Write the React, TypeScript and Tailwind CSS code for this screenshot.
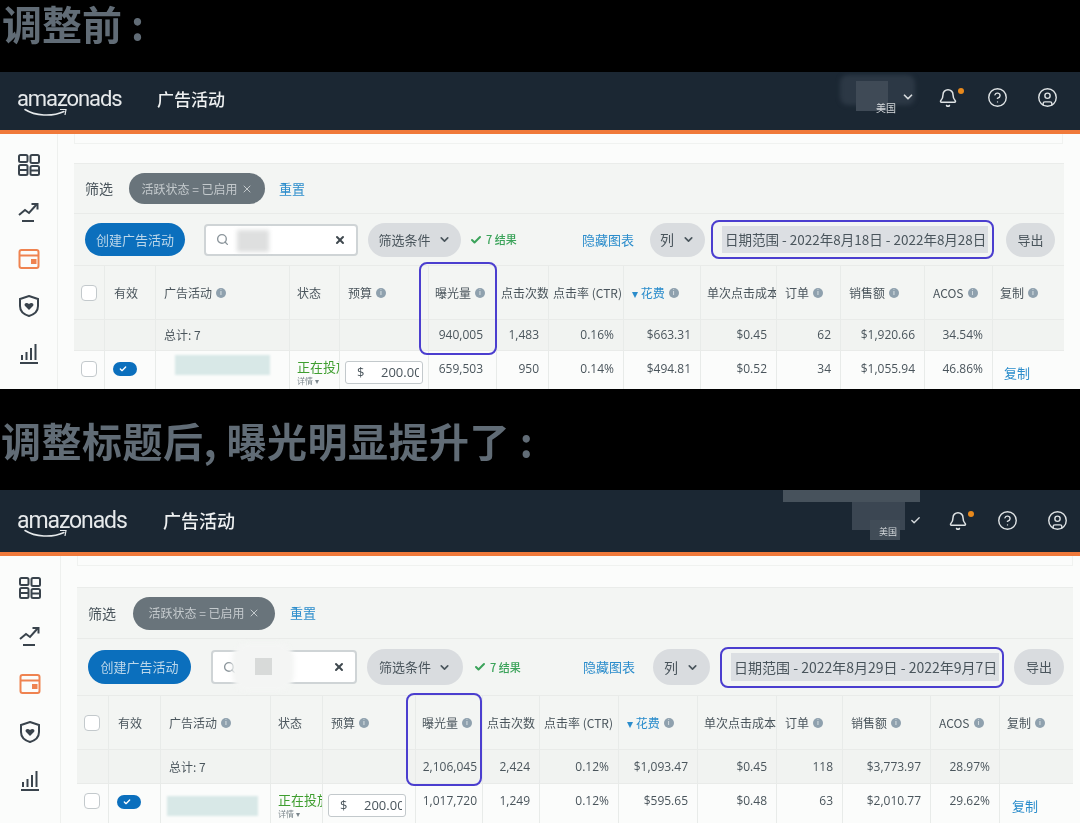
import { Bell, Check, ChevronDown, CircleHelp, CircleUser, Search, X } from 'lucide-react'

const cjk = "font-['Noto_Sans_CJK_SC','Noto_Sans',sans-serif]"

type Shot = {
  frame: string
  header: string
  logo: string
  title: string
  rail: string
  railGap: string
  card: string
  panel: string
  filterRow: string
  chip: string
  toolbar: string
  createBtn: string
  searchBox: string
  filterBtn: string
  resultMl: string
  hideMl: string
  colBtn: string
  dateBox: string
  dateInner: string
  exportBtn: string
  cols: string
  headRow: string
  totalRow: string
  dataRow: string
  firstNum: string
  numTop: string
  namePatch: string
  copyLink: string
  icons: string
  totals: string[]
  row: string[]
  dates: string
  box: string
}

const heads: [string, string][] = [
  ['曝光量', 'pl-[6px]'],
  ['点击次数', 'pl-[4px]'],
  ['点击率 (CTR)', 'pl-[4px]'],
  ['▾ 花费', 'pl-[8px]'],
  ['单次点击成本', 'pl-[6px]'],
  ['订单', 'pl-[8px]'],
  ['销售额', 'pl-[8px]'],
  ['ACOS', 'pl-[8px]'],
  ['复制', 'pl-[7px]'],
]

const before: Shot = {
  frame: 'h-[317px]',
  header: 'h-[58px] pb-[4px]',
  logo: 'text-[22px] w-[140px]',
  title: 'text-[17px]',
  rail: 'w-[58px]',
  railGap: 'pt-[20px] gap-[25px]',
  card: 'h-[10px] ml-[16px] w-[989px]',
  panel: 'ml-[16px] mt-[19px] w-[990px]',
  filterRow: 'h-[50px] pl-[11px]',
  chip: 'w-[136px] h-[31px] ml-[16px] mr-[14px]',
  toolbar: 'h-[51px] pl-[11px]',
  createBtn: 'w-[100px] h-[33px]',
  searchBox: 'w-[154px] h-[32px] ml-[19px]',
  filterBtn: 'w-[93px] h-[34px] ml-[10px]',
  resultMl: 'ml-[9px] w-[53px]',
  hideMl: 'ml-[59px] w-[52px]',
  colBtn: 'w-[55px] h-[34px] ml-[16px]',
  dateBox: 'w-[283px] h-[39px] ml-[6px] pl-[9px] pr-[4px] text-[13.5px]',
  dateInner: 'h-[27px]',
  exportBtn: 'w-[49px] h-[34px] ml-[12px]',
  cols: 'grid-cols-[31px_51px_134px_50px_89px_68px_52px_75px_77px_76px_64px_84px_68px_71px]',
  headRow: 'h-[54px]',
  totalRow: 'h-[31px]',
  dataRow: 'h-[42px]',
  firstNum: 'pr-[13px]',
  numTop: 'pt-[10px]',
  namePatch: 'ml-[19px] mt-[4px] w-[95px] h-[20px]',
  copyLink: 'pl-[11px]',
  icons: 'top-[15px] right-[22px] gap-[29px]',
  totals: ['940,005', '1,483', '0.16%', '$663.31', '$0.45', '62', '$1,920.66', '34.54%', ''],
  row: ['659,503', '950', '0.14%', '$494.81', '$0.52', '34', '$1,055.94', '46.86%'],
  dates: '日期范围 - 2022年8月18日 - 2022年8月28日',
  box: 'left-[419px] top-[190px] w-[78px] h-[93px]',
}

const after: Shot = {
  frame: 'h-[333px]',
  header: 'h-[62px] pb-[2px]',
  logo: 'text-[23px] w-[146px]',
  title: 'text-[18px]',
  rail: 'w-[61px]',
  railGap: 'pt-[21px] gap-[26px]',
  card: 'h-[10px] ml-[16px] w-[996px]',
  panel: 'ml-[16px] mt-[21px] w-[996px]',
  filterRow: 'h-[51px] pl-[11px]',
  chip: 'w-[142px] h-[33px] ml-[17px] mr-[15px]',
  toolbar: 'h-[56px] pl-[11px]',
  createBtn: 'w-[103px] h-[34px]',
  searchBox: 'w-[146px] h-[34px] ml-[20px]',
  filterBtn: 'w-[96px] h-[36px] ml-[10px]',
  resultMl: 'ml-[11px] w-[53px]',
  hideMl: 'ml-[56px] w-[52px]',
  colBtn: 'w-[57px] h-[36px] ml-[18px]',
  dateBox: 'w-[284px] h-[41px] ml-[10px] pl-[9px] pr-[3px] text-[14px]',
  dateInner: 'h-[28px]',
  exportBtn: 'w-[50px] h-[36px] ml-[10px]',
  cols: 'grid-cols-[32px_52px_110px_52px_93px_67px_57px_79px_79px_79px_66px_88px_69px_73px]',
  headRow: 'h-[54px]',
  totalRow: 'h-[34px]',
  dataRow: 'h-[40px]',
  firstNum: 'pr-[5px]',
  numTop: 'pt-[9px]',
  namePatch: 'ml-[6px] mt-[12px] w-[91px] h-[20px]',
  copyLink: 'pl-[12px]',
  icons: 'top-[20px] right-[12px] gap-[29px]',
  totals: ['2,106,045', '2,424', '0.12%', '$1,093.47', '$0.45', '118', '$3,773.97', '28.97%', ''],
  row: ['1,017,720', '1,249', '0.12%', '$595.65', '$0.48', '63', '$2,010.77', '29.62%'],
  dates: '日期范围 - 2022年8月29日 - 2022年9月7日',
  box: 'left-[406px] top-[203px] w-[76px] h-[93px]',
}

function Info() {
  return (
    <span className="inline-flex w-[10px] h-[10px] shrink-0 ml-[4px] rounded-full bg-[#8fa1ae] items-center justify-center text-[7px] leading-none text-[#eef2f3]">
      i
    </span>
  )
}

function Amazon({ cls }: { cls: string }) {
  return (
    <div className={`relative shrink-0 font-['Roboto',sans-serif] tracking-[-1.1px] leading-none text-[#e6e9eb] ${cls}`}>
      amazonads
      <svg className="absolute left-[7px] top-[20px]" width="46" height="10" viewBox="0 0 46 10" fill="none">
        <path d="M1 1.5C11 8 28 9 40 3.5" stroke="#e6e9eb" strokeWidth="1.5" strokeLinecap="round" />
        <path d="M36 1.5L42 1.5L41 7" stroke="#e6e9eb" strokeWidth="1.2" />
      </svg>
    </div>
  )
}

function RailIcons({ cls }: { cls: string }) {
  return (
    <div className={`flex flex-col items-center ${cls}`}>
      <svg width="22" height="22" viewBox="0 0 22 22" fill="none" stroke="#39434c" strokeWidth="2">
        <rect x="1" y="1" width="8.5" height="7" rx="1.5" />
        <rect x="12.5" y="1" width="8.5" height="8" rx="1.5" />
        <rect x="1" y="11" width="8.5" height="10" rx="1.5" />
        <rect x="12.5" y="12" width="8.5" height="9" rx="1.5" />
        <path d="M1 16H9.5M12.5 16.5H21" />
      </svg>
      <svg width="22" height="22" viewBox="0 0 22 22" fill="none" stroke="#39434c" strokeWidth="2">
        <path d="M1 14L7 9L11 12L19 3" />
        <path d="M13.5 3H19.5V8.5" />
        <path d="M4 20H16" />
      </svg>
      <svg width="22" height="22" viewBox="0 0 22 22" fill="none" stroke="#ef8350" strokeWidth="2">
        <rect x="1.5" y="2" width="19" height="18" rx="2" />
        <path d="M1.5 7.5H20.5" />
        <rect x="14" y="12" width="3.5" height="3" fill="#ef8350" />
      </svg>
      <svg width="22" height="22" viewBox="0 0 22 22" fill="none" stroke="#39434c" strokeWidth="2">
        <path d="M11 1L20 4V11C20 16 16 19.5 11 21C6 19.5 2 16 2 11V4L11 1Z" />
        <path d="M11 15L6.8 10.8C5.6 8.6 8.6 6.8 11 9C13.4 6.8 16.4 8.6 15.2 10.8L11 15Z" fill="#39434c" stroke="none" />
      </svg>
      <svg width="22" height="22" viewBox="0 0 22 22" fill="none" stroke="#39434c" strokeWidth="2">
        <path d="M4 18V13M8.5 18V10M13 18V6M17.5 18V2" />
        <path d="M2 21H20" />
      </svg>
    </div>
  )
}

function Account({ later }: { later: boolean }) {
  if (later) {
    return (
      <>
        <div className="absolute left-[783px] top-0 w-[137px] h-[12px] bg-[#47525c]" />
        <div className="absolute left-[852px] top-[12px] w-[53px] h-[28px] bg-[#3b4652]" />
        <div className="absolute left-[870px] top-[30px] w-[30px] h-[20px] bg-[#414c57]" />
        <span className={`absolute left-[879px] top-[36px] text-[9px] leading-[12px] text-[#d5d9dc] ${cjk}`}>美国</span>
        <Check className="absolute left-[910px] top-[25px] text-[#d5d9dc]" size={11} strokeWidth={3} />
      </>
    )
  }
  return (
    <>
      <div className="absolute left-[840px] top-[3px] w-[75px] h-[30px] rounded-lg bg-[#2c3845] blur-[2px]" />
      <div className="absolute left-[856px] top-[9px] w-[32px] h-[30px] bg-[#3f4a56]" />
      <span className={`absolute left-[876px] top-[29px] text-[10px] leading-[14px] text-[#d5d9dc] ${cjk}`}>美国</span>
      <ChevronDown className="absolute left-[901px] top-[18px] text-[#d5d9dc]" size={14} strokeWidth={3} />
    </>
  )
}

function Screenshot({ s, later }: { s: Shot; later: boolean }) {
  const border = 'border-r border-[#e8ebe9]'
  return (
    <section className={`relative overflow-hidden bg-[#fbfcfb] blur-[0.5px] ${s.frame} ${cjk}`}>
      <header className={`relative flex items-center pl-[17px] bg-[#1b2733] ${s.header}`}>
        <Amazon cls={s.logo} />
        <span className={`font-medium text-[#eef0f1] ${s.title}`}>广告活动</span>
        <Account later={later} />
        <div className={`absolute flex items-center text-[#dfe3e5] ${s.icons}`}>
          <div className="relative">
            <Bell size={20} strokeWidth={1.8} />
            <span className="absolute -right-[6px] top-0 w-[6px] h-[6px] rounded-full bg-[#e8891c]" />
          </div>
          <CircleHelp size={21} strokeWidth={1.6} />
          <CircleUser size={21} strokeWidth={1.6} />
        </div>
      </header>
      <div className="h-[4px] bg-[#f0793a]" />

      <div className="flex">
        <aside className={`shrink-0 self-stretch h-[300px] border-r border-[#eef0ee] ${s.rail}`}>
          <RailIcons cls={s.railGap} />
        </aside>
        <main>
          <div className={`border-b border-x border-[#f0f2f0] ${s.card}`} />
          <div className={`bg-[#f3f5f3] border-t border-[#eaecea] ${s.panel}`}>
            <div className={`flex items-center border-b border-[#e9ebe9] ${s.filterRow}`}>
              <span className="text-[14px] text-[#4a555c]">筛选</span>
              <span className={`flex items-center justify-center rounded-full bg-[#69747b] text-[12px] text-[#c4cacd] ${s.chip}`}>
                活跃状态 = 已启用
                <X className="ml-[3px]" size={12} />
              </span>
              <a className="text-[13px] text-[#2a8ccb]">重置</a>
            </div>

            <div className={`flex items-center ${s.toolbar}`}>
              <button className={`rounded-full bg-[#0b6fbd] text-[13px] text-[#bcd7ea] ${s.createBtn}`}>创建广告活动</button>
              <div className={`relative flex items-center justify-between px-[10px] bg-white border-2 border-[#cfd4d6] rounded-[4px] ${s.searchBox}`}>
                <Search className="text-[#8b959b]" size={13} strokeWidth={2.5} />
                <X className="text-[#3f484e]" size={12} strokeWidth={4} />
                {later ? (
                  <>
                    <div className="absolute left-[19px] -top-[9px] w-[62px] h-[48px] rounded-2xl bg-[#f4f5f4] blur-[2px]" />
                    <div className="absolute left-[42px] top-[6px] w-[17px] h-[17px] bg-[#d8dad9]" />
                  </>
                ) : (
                  <div className="absolute left-[31px] top-[4px] w-[32px] h-[22px] bg-[#dedfdf] blur-[2px]" />
                )}
              </div>
              <button className={`flex items-center justify-center gap-[7px] rounded-full bg-[#d9dcdf] text-[13px] text-[#4a555c] ${s.filterBtn}`}>
                筛选条件
                <ChevronDown size={13} strokeWidth={3} />
              </button>
              <span className={`flex items-center shrink-0 whitespace-nowrap text-[11px] font-medium text-[#3ba35a] ${s.resultMl}`}>
                <Check className="mr-[4px]" size={12} strokeWidth={4} />7 结果
              </span>
              <a className={`shrink-0 whitespace-nowrap text-[13px] text-[#2a8ccb] ${s.hideMl}`}>隐藏图表</a>
              <button className={`flex items-center justify-center gap-[8px] shrink-0 rounded-full bg-[#d9dcdf] text-[14px] text-[#4a555c] ${s.colBtn}`}>
                列
                <ChevronDown size={13} strokeWidth={3} />
              </button>
              <div className={`flex items-center shrink-0 border-[2.5px] border-[#4b3ecf] rounded-[8px] ${s.dateBox}`}>
                <div className={`flex items-center w-full pl-[3px] whitespace-nowrap bg-[#dcdfe3] text-[#4a555c] ${s.dateInner}`}>
                  {s.dates}
                </div>
              </div>
              <button className={`shrink-0 rounded-full bg-[#d9dcdf] text-[13px] text-[#4a555c] ${s.exportBtn}`}>导出</button>
            </div>

            <div className={`grid items-stretch border-t border-[#e9ebe9] text-[12px] text-[#4a555c] ${s.cols} ${s.headRow}`}>
              <div className={`flex items-center pl-[7px] ${border}`}>
                <span className="w-[16px] h-[16px] rounded-[4px] bg-white border-[1.5px] border-[#c3c9cc]" />
              </div>
              <div className={`flex items-center pl-[9px] ${border}`}>有效</div>
              <div className={`flex items-center pl-[8px] ${border}`}>广告活动<Info /></div>
              <div className={`flex items-center pl-[7px] ${border}`}>状态</div>
              <div className={`flex items-center pl-[8px] ${border}`}>预算<Info /></div>
              {heads.map(([label, pad], i) => (
                <div
                  key={label}
                  className={`flex items-center overflow-hidden whitespace-nowrap ${pad} ${i === 3 ? 'text-[#2a8ccb]' : ''} ${i < 8 ? border : ''}`}
                >
                  {label}
                  {i !== 1 && i !== 2 && i !== 4 && <Info />}
                </div>
              ))}
            </div>

            <div className={`grid items-stretch border-t border-[#e9ebe9] bg-[#f1f3f1] text-[#4a555c] ${s.cols} ${s.totalRow}`}>
              <div className={border} />
              <div className={border} />
              <div className={`flex items-center pl-[8px] text-[12px] ${border}`}>总计: 7</div>
              <div className={border} />
              <div className={border} />
              {s.totals.map((v, i) => (
                <div
                  key={i}
                  className={`flex items-center justify-end text-[12px] font-['Open_Sans',sans-serif] ${i === 0 ? s.firstNum : 'pr-[9px]'} ${i < 8 ? border : ''}`}
                >
                  {v}
                </div>
              ))}
            </div>

            <div className={`grid items-stretch bg-[#fbfcfb] border-t border-[#e9ebe9] text-[#4a555c] ${s.cols} ${s.dataRow}`}>
              <div className={`pl-[7px] ${s.numTop} ${border}`}>
                <span className="block w-[16px] h-[16px] rounded-[4px] bg-white border-[1.5px] border-[#c3c9cc]" />
              </div>
              <div className={`pl-[8px] pt-[11px] ${border}`}>
                <span className="flex items-center pl-[6px] w-[24px] h-[14px] rounded-full bg-[#0b6fbd] text-white">
                  <Check size={8} strokeWidth={4} />
                </span>
              </div>
              <div className={border}>
                <div className={`bg-[#d8e8e7] blur-[1px] ${s.namePatch}`} />
              </div>
              <div className={`overflow-hidden pl-[7px] pt-[8px] whitespace-nowrap ${border}`}>
                <div className="text-[13px] leading-[16px] text-[#3f9e2f]">正在投放</div>
                <div className="text-[8px] leading-[12px] text-[#7a858b]">详情 ▾</div>
              </div>
              <div className={`pl-[5px] pt-[10px] ${border}`}>
                <div className="flex items-center overflow-hidden w-[78px] h-[23px] pl-[11px] pr-[3px] bg-white border border-[#c3c9cc] rounded-[3px] text-[13px] font-['Open_Sans',sans-serif]">
                  <span className="w-[24px]">$</span>
                  <span className="flex-1 overflow-hidden whitespace-nowrap">200.00</span>
                </div>
              </div>
              {s.row.map((v, i) => (
                <div
                  key={i}
                  className={`text-right text-[12px] leading-[16px] font-['Open_Sans',sans-serif] ${s.numTop} ${i === 0 ? s.firstNum : 'pr-[9px]'} ${border}`}
                >
                  {v}
                </div>
              ))}
              <div className={`pt-[14px] text-[13px] leading-[16px] text-[#2a8ccb] ${s.copyLink}`}>复制</div>
            </div>
          </div>
        </main>
      </div>

      <div className={`absolute rounded-[8px] border-[2.5px] border-[#4b3ecf] ${s.box}`} />
    </section>
  )
}

export default function App() {
  return (
    <div className={`w-[1080px] h-[823px] overflow-hidden bg-black ${cjk}`}>
      <h2 className="h-[72px] pt-[1px] pl-[2px] text-[40px] leading-[44px] font-bold text-[#616c76] blur-[0.4px]">调整前 :</h2>
      <Screenshot s={before} later={false} />
      <h2 className="flex items-center h-[101px] pl-[1px] text-[40px] leading-[44px] tracking-[0.5px] font-bold text-[#616c76] blur-[0.4px]">调整标题后, 曝光明显提升了 :</h2>
      <Screenshot s={after} later />
    </div>
  )
}
